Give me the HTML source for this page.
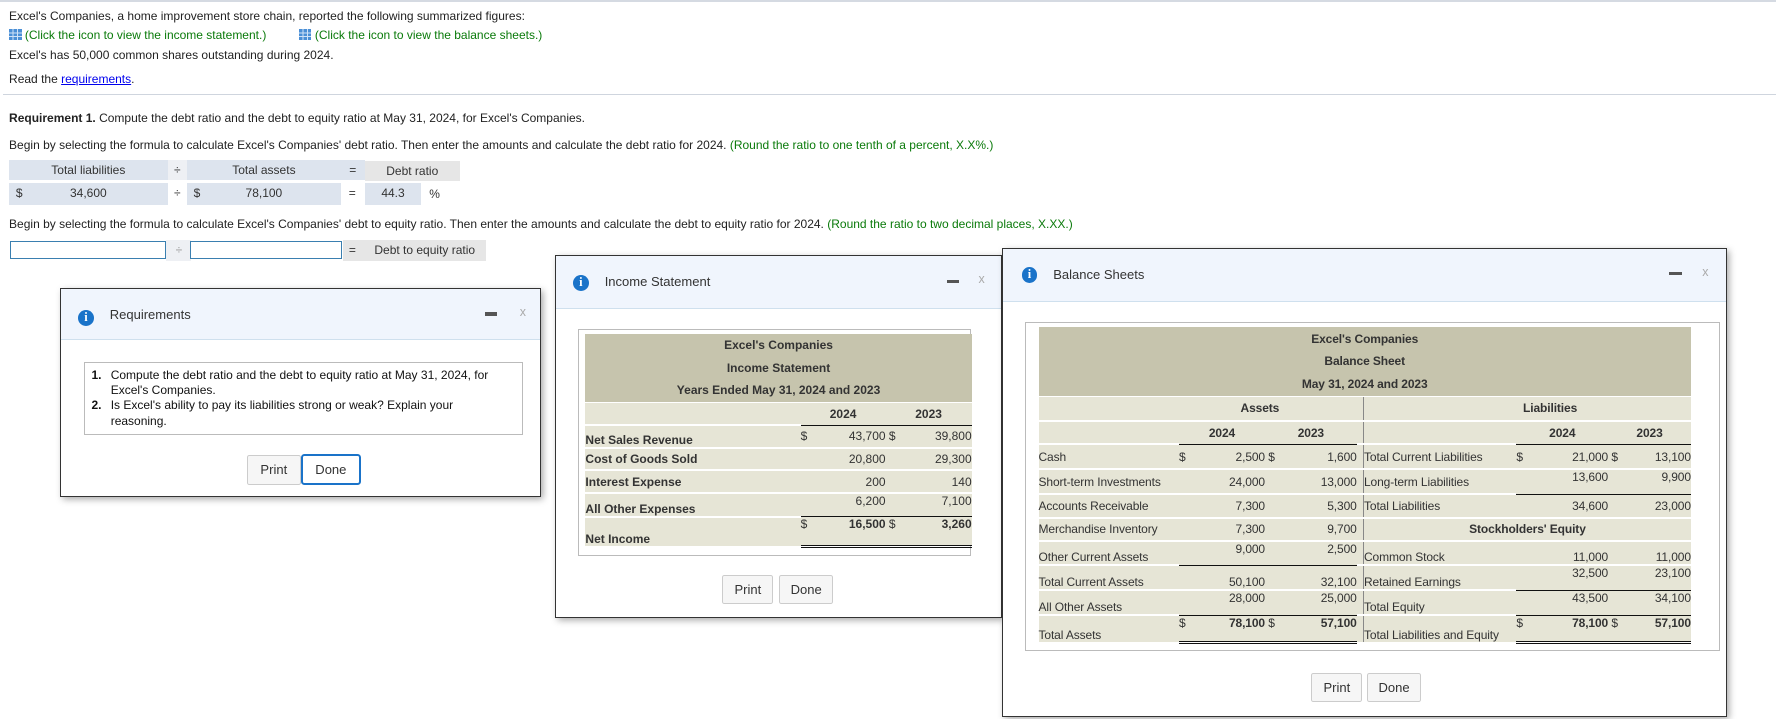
<!DOCTYPE html>
<html><head><meta charset="utf-8">
<style>
html,body{margin:0;padding:0;background:#fff;width:1776px;height:719px;overflow:hidden}
#w{zoom:1.13265;position:relative;width:1568px;height:635px;font-family:"Liberation Sans",Arial,sans-serif;font-size:10.6px;color:#222}
.a{position:absolute;white-space:nowrap}
.g{color:#0a7a0a}
.ic{display:inline-block;width:11px;height:10px;background:#4a8fd6;vertical-align:-1px;margin-right:3px;background-image:linear-gradient(90deg,transparent 3px,#cfe2f7 3px,#cfe2f7 4px,transparent 4px,transparent 7px,#cfe2f7 7px,#cfe2f7 8px,transparent 8px),linear-gradient(transparent 3px,#cfe2f7 3px,#cfe2f7 4px,transparent 4px,transparent 6px,#cfe2f7 6px,#cfe2f7 7px,transparent 7px)}
.cell{position:absolute;text-align:center;line-height:18px;color:#333}
.blu{background:#dde4ee}.gr{background:#e6e6e6}
.inp{position:absolute;border:1px solid #3a7fb0;background:#fff;height:14px}
.win{position:absolute;background:#fff;border:1px solid #333;box-shadow:2px 2px 6px rgba(0,0,0,.35)}
.hd{position:absolute;left:0;right:0;top:0;background:#f0f5fd;border-bottom:1px solid #cfe0ee}
.info{position:absolute;width:14px;height:14px;border-radius:50%;background:#1a73c9;color:#fff;font:bold 11px "Liberation Serif",serif;text-align:center;line-height:14px}
.tt{position:absolute;font-size:11.5px;color:#333}
.min{position:absolute;width:11px;height:3px;background:#555}
.x{position:absolute;color:#aaa;font-size:11px}
.btn{position:absolute;border:1px solid #ccc;background:#f6f6f6;border-radius:2px;text-align:center;color:#333;font-size:11.5px}
table{border-collapse:collapse;table-layout:fixed;position:absolute;font-size:10.6px;color:#333}
td{padding:0;background:#e6e5d6;border-bottom:2px solid #fff;white-space:nowrap}
td.r{text-align:right}
.ul{border-bottom:1px solid #111!important}
.du{border-bottom:3px double #111!important}
.b{font-weight:bold}
.bs td{letter-spacing:-0.1px}
</style></head><body><div id="w">
<div class="a" style="left:0;top:0;width:1568px;height:2px;background:#d5dae2"></div>
<div class="a" style="left:8px;top:8px">Excel's Companies, a home improvement store chain, reported the following summarized figures:</div>
<div class="a g" style="left:8px;top:25px"><span class="ic"></span>(Click the icon to view the income statement.)</div>
<div class="a g" style="left:264px;top:25px"><span class="ic"></span>(Click the icon to view the balance sheets.)</div>
<div class="a" style="left:8px;top:42px">Excel's has 50,000 common shares outstanding during 2024.</div>
<div class="a" style="left:8px;top:64px">Read the <span style="color:#00e;text-decoration:underline">requirements</span>.</div>
<div class="a" style="left:3px;top:83px;width:1565px;height:1px;background:#cfd5de"></div>
<div class="a" style="left:8px;top:98px"><b>Requirement 1.</b> Compute the debt ratio and the debt to equity ratio at May 31, 2024, for Excel's Companies.</div>
<div class="a" style="left:8px;top:122px">Begin by selecting the formula to calculate Excel's Companies' debt ratio. Then enter the amounts and calculate the debt ratio for 2024. <span class="g">(Round the ratio to one tenth of a percent, X.X%.)</span></div>
<div class="cell blu" style="left:8px;top:141px;width:140px">Total liabilities</div>
<div class="cell" style="left:148px;top:141px;width:17px;background:#eef0f4">÷</div>
<div class="cell blu" style="left:165px;top:141px;width:136px">Total assets</div>
<div class="cell blu" style="left:301px;top:141px;width:21px">=</div>
<div class="cell gr" style="left:322px;top:142px;width:84px">Debt ratio</div>
<div class="cell blu" style="left:8px;top:162px;width:140px;height:19px"><span style="position:absolute;left:6px">$</span>34,600</div>
<div class="cell" style="left:148px;top:162px;width:17px">÷</div>
<div class="cell blu" style="left:165px;top:162px;width:136px;height:19px"><span style="position:absolute;left:6px">$</span>78,100</div>
<div class="cell" style="left:301px;top:162px;width:20px">=</div>
<div class="cell blu" style="left:322px;top:162px;width:50px;height:19px">44.3</div>
<div class="a" style="left:379px;top:165px;color:#333">%</div>
<div class="a" style="left:8px;top:192px">Begin by selecting the formula to calculate Excel's Companies' debt to equity ratio. Then enter the amounts and calculate the debt to equity ratio for 2024. <span class="g">(Round the ratio to two decimal places, X.XX.)</span></div>
<div class="inp" style="left:9px;top:213px;width:136px"></div>
<div class="cell" style="left:147px;top:212px;width:22px;background:#eef0f4;color:#999">÷</div>
<div class="inp" style="left:168px;top:213px;width:132px"></div>
<div class="cell gr" style="left:303px;top:212px;width:126px"><span style="position:absolute;left:5px">=</span><span style="margin-left:18px">Debt to equity ratio</span></div>

<!-- Requirements -->
<div class="win" style="left:53px;top:254px;width:423px;height:183px">
<div class="hd" style="height:44px"></div>
<div class="info" style="left:15px;top:19px">i</div>
<div class="tt" style="left:43px;top:16px">Requirements</div>
<div class="min" style="left:374px;top:21px"></div>
<div class="x" style="left:405px;top:14px">x</div>
<div style="position:absolute;left:20px;top:65px;width:386px;height:62px;border:1px solid #bbb;font-size:10.6px;line-height:13.5px;color:#111">
<div style="position:absolute;left:6px;top:4px"><b>1.</b></div><div style="position:absolute;left:23px;top:4px;width:350px">Compute the debt ratio and the debt to equity ratio at May 31, 2024, for Excel's Companies.</div>
<div style="position:absolute;left:6px;top:31px"><b>2.</b></div><div style="position:absolute;left:23px;top:31px;width:320px">Is Excel's ability to pay its liabilities strong or weak? Explain your reasoning.</div>
</div>
<div class="btn" style="left:164px;top:147px;width:46px;height:25px;line-height:25px">Print</div>
<div class="btn" style="left:212px;top:146px;width:49px;height:24px;line-height:24px;border:2px solid #1a73c9;background:#fff;border-radius:3px">Done</div>
</div>

<!-- Income Statement -->
<div class="win" style="left:490px;top:225px;width:393px;height:319px">
<div class="hd" style="height:46px"></div>
<div class="info" style="left:15px;top:17px">i</div>
<div class="tt" style="left:43px;top:16px">Income Statement</div>
<div class="min" style="left:345px;top:21px"></div>
<div class="x" style="left:373px;top:14px">x</div>
<div style="position:absolute;left:19px;top:65px;width:346px;height:198px;border:1px solid #bbb"></div>
<table style="left:26px;top:69px;width:341px">
<col style="width:190px"><col style="width:14px"><col style="width:61px"><col style="width:12px"><col style="width:64px">
<tr><td colspan="5" class="b" style="background:#c6c4ad;text-align:center;height:59px;line-height:20px;border-bottom:1px solid #fff">Excel's Companies<br>Income Statement<br>Years Ended May 31, 2024 and 2023</td></tr>
<tr style="height:20px"><td></td><td colspan="2" class="b ul" style="text-align:center">2024</td><td colspan="2" class="b ul" style="text-align:center">2023</td></tr>
<tr style="height:20px"><td class="b" style="vertical-align:bottom">Net Sales Revenue</td><td>$</td><td class="r">43,700</td><td>&nbsp;$</td><td class="r">39,800</td></tr>
<tr style="height:20px"><td class="b">Cost of Goods Sold</td><td></td><td class="r">20,800</td><td></td><td class="r">29,300</td></tr>
<tr style="height:20px"><td class="b">Interest Expense</td><td></td><td class="r">200</td><td></td><td class="r">140</td></tr>
<tr style="height:21px"><td class="b" style="vertical-align:bottom">All Other Expenses</td><td class="ul"></td><td class="r ul" style="vertical-align:top">6,200</td><td class="ul"></td><td class="r ul" style="vertical-align:top">7,100</td></tr>
<tr style="height:26px"><td class="b" style="vertical-align:bottom;border-bottom:0">Net Income</td><td class="du" style="vertical-align:top">$</td><td class="r b du" style="vertical-align:top">16,500</td><td class="du" style="vertical-align:top">&nbsp;$</td><td class="r b du" style="vertical-align:top">3,260</td></tr>
</table>
<div class="btn" style="left:147px;top:282px;width:43px;height:24px;line-height:24px">Print</div>
<div class="btn" style="left:197px;top:282px;width:46px;height:24px;line-height:24px">Done</div>
</div>

<!-- Balance Sheets -->
<div class="win" style="left:885px;top:219px;width:638px;height:412px">
<div class="hd" style="height:46px"></div>
<div class="info" style="left:16px;top:16px">i</div>
<div class="tt" style="left:44px;top:16px">Balance Sheets</div>
<div class="min" style="left:588px;top:20px"></div>
<div class="x" style="left:617px;top:14px">x</div>
<div style="position:absolute;left:19px;top:64px;width:612px;height:289px;border:1px solid #bbb"></div>
<table class="bs" style="left:31px;top:69px;width:576px">
<col style="width:124px"><col style="width:15px"><col style="width:61px"><col style="width:12px"><col style="width:69px"><col style="width:6px"><col style="width:135px"><col style="width:12px"><col style="width:69px"><col style="width:12px"><col style="width:61px">
<tr><td colspan="11" class="b" style="background:#c6c4ad;text-align:center;height:61px;line-height:20px;border-bottom:1px solid #fff">Excel's Companies<br>Balance Sheet<br>May 31, 2024 and 2023</td></tr>
<tr style="height:21px"><td colspan="5" class="b" style="text-align:center;padding-left:110px">Assets</td><td style="border-right:1px solid #888"></td><td colspan="5" class="b" style="text-align:center;padding-left:40px">Liabilities</td></tr>
<tr style="height:21px"><td></td><td colspan="2" class="b ul" style="text-align:center">2024</td><td colspan="2" class="b ul" style="text-align:center">2023</td><td style="border-right:1px solid #888"></td><td></td><td colspan="2" class="b ul" style="text-align:center">2024</td><td colspan="2" class="b ul" style="text-align:center">2023</td></tr>
<tr style="height:22px"><td>Cash</td><td>$</td><td class="r">2,500</td><td>&nbsp;$</td><td class="r">1,600</td><td style="border-right:1px solid #888"></td><td>Total Current Liabilities</td><td>$</td><td class="r">21,000</td><td>&nbsp;$</td><td class="r">13,100</td></tr>
<tr style="height:22px"><td>Short-term Investments</td><td></td><td class="r">24,000</td><td></td><td class="r">13,000</td><td style="border-right:1px solid #888"></td><td>Long-term Liabilities</td><td class="ul"></td><td class="r ul" style="vertical-align:top">13,600</td><td class="ul"></td><td class="r ul" style="vertical-align:top">9,900</td></tr>
<tr style="height:21px"><td>Accounts Receivable</td><td></td><td class="r">7,300</td><td></td><td class="r">5,300</td><td style="border-right:1px solid #888"></td><td>Total Liabilities</td><td></td><td class="r">34,600</td><td></td><td class="r">23,000</td></tr>
<tr style="height:20px"><td>Merchandise Inventory</td><td></td><td class="r">7,300</td><td></td><td class="r">9,700</td><td style="border-right:1px solid #888"></td><td colspan="5" class="b" style="text-align:center">Stockholders' Equity</td></tr>
<tr style="height:22px"><td style="vertical-align:bottom">Other Current Assets</td><td class="ul"></td><td class="r ul" style="vertical-align:top">9,000</td><td class="ul"></td><td class="r ul" style="vertical-align:top">2,500</td><td style="border-right:1px solid #888"></td><td style="vertical-align:bottom">Common Stock</td><td></td><td class="r" style="vertical-align:bottom">11,000</td><td></td><td class="r" style="vertical-align:bottom">11,000</td></tr>
<tr style="height:22px"><td style="vertical-align:bottom">Total Current Assets</td><td></td><td class="r" style="vertical-align:bottom">50,100</td><td></td><td class="r" style="vertical-align:bottom">32,100</td><td style="border-right:1px solid #888"></td><td style="vertical-align:bottom">Retained Earnings</td><td class="ul"></td><td class="r ul" style="vertical-align:top">32,500</td><td class="ul"></td><td class="r ul" style="vertical-align:top">23,100</td></tr>
<tr style="height:22px"><td style="vertical-align:bottom">All Other Assets</td><td class="ul"></td><td class="r ul" style="vertical-align:top">28,000</td><td class="ul"></td><td class="r ul" style="vertical-align:top">25,000</td><td style="border-right:1px solid #888"></td><td style="vertical-align:bottom">Total Equity</td><td class="ul"></td><td class="r ul" style="vertical-align:top">43,500</td><td class="ul"></td><td class="r ul" style="vertical-align:top">34,100</td></tr>
<tr style="height:24px"><td style="vertical-align:bottom;border-bottom:0">Total Assets</td><td class="du" style="vertical-align:top">$</td><td class="r b du" style="vertical-align:top">78,100</td><td class="du" style="vertical-align:top">&nbsp;$</td><td class="r b du" style="vertical-align:top">57,100</td><td style="border-right:1px solid #888;border-bottom:0"></td><td style="vertical-align:bottom;border-bottom:0">Total Liabilities and Equity</td><td class="du" style="vertical-align:top">$</td><td class="r b du" style="vertical-align:top">78,100</td><td class="du" style="vertical-align:top">&nbsp;$</td><td class="r b du" style="vertical-align:top">57,100</td></tr>
</table>
<div class="btn" style="left:272px;top:374px;width:43px;height:24px;line-height:24px">Print</div>
<div class="btn" style="left:321px;top:374px;width:46px;height:24px;line-height:24px">Done</div>
</div>
</div></body></html>
